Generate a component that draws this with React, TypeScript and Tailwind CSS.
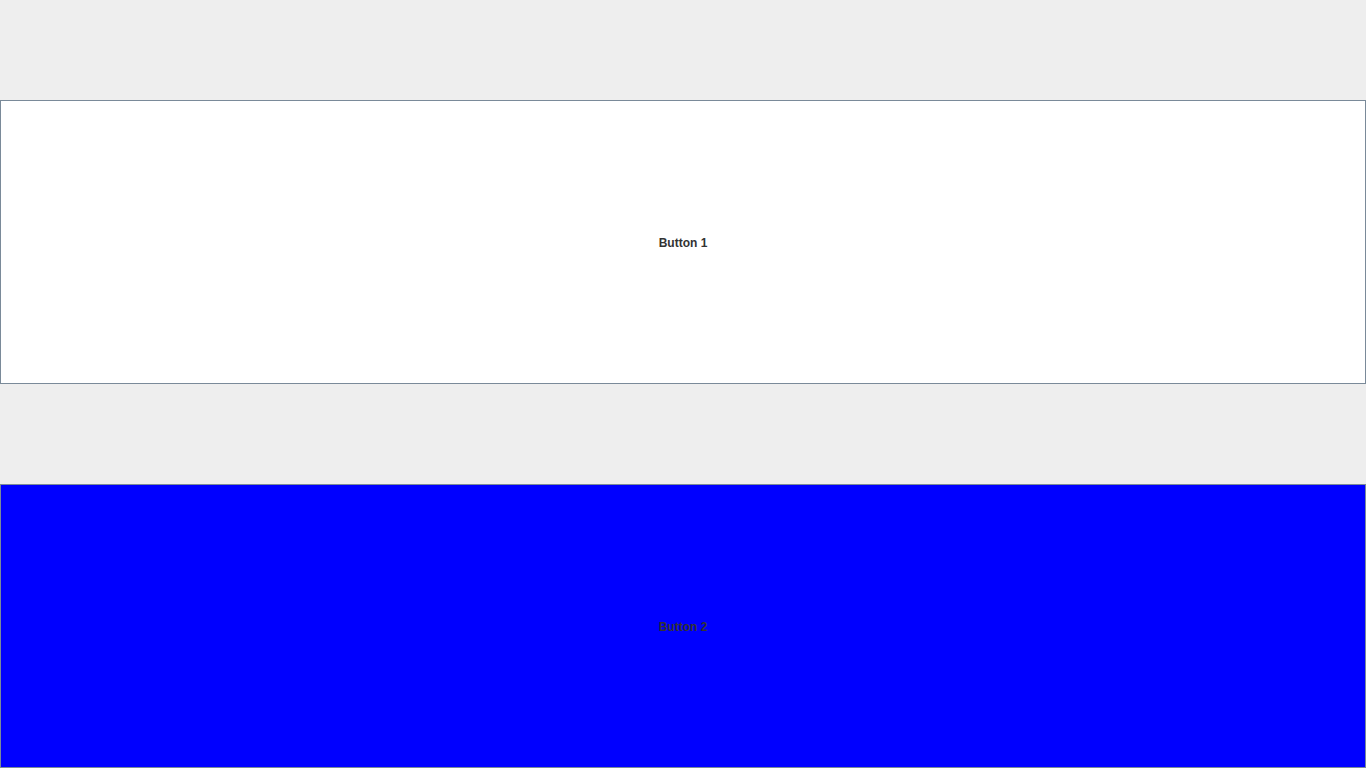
import React from "react";

const App = () => {
  return (
    <div className="flex h-[768px] w-[1366px] flex-col gap-[100px] bg-[#eeeeee] pt-[100px] font-['Liberation_Sans',Arial,sans-serif]">
      <button className="flex h-[284px] w-full items-center justify-center border border-[#7a8a99] bg-white pt-[2px] text-[12px] font-bold text-[#333333]">
        Button 1
      </button>
      <button className="flex h-[284px] w-full items-center justify-center border border-[#7a8a99] bg-[#0000ff] pt-[2px] text-[12px] font-bold text-[#333333]">
        Button 2
      </button>
    </div>
  );
};

export default App;
